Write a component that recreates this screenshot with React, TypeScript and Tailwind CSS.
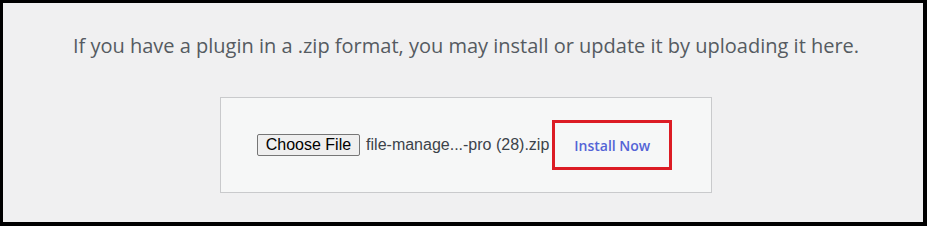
import React from "react";

export default function App() {
  return (
    <div className="w-[927px] h-[226px] box-border border-black border-t-[3px] border-l-[3px] border-r-[4px] border-b-[4px] bg-[#f0f0f1] flex flex-col items-center">
      <p
        className="mt-[29px] pl-[6px] text-[20px] leading-[28px] text-[#555b61] whitespace-nowrap"
        style={{ fontFamily: '"Open Sans", "Noto Sans", sans-serif' }}
      >
        If you have a plugin in a .zip format, you may install or update it by uploading it here.
      </p>
      <div className="mt-[37px] ml-[6px] w-[492px] h-[96px] box-border border border-[#c9cacc] bg-[#f6f7f7] flex items-center justify-center">
        <div className="flex items-center mr-[3px]" style={{ fontFamily: '"Liberation Sans", Arial, sans-serif' }}>
          <span className="h-[22px] px-[8px] box-border border border-[#767676] rounded-[2px] bg-[#efefef] text-[16px] leading-[20px] text-black">
            Choose File
          </span>
          <span className="ml-[6px] text-[16px] text-[#3c434a]">file-manage...-pro (28).zip</span>
          <div className="ml-[3px] w-[120px] h-[50px] box-border border-[3px] border-[#dc1c24] flex items-center justify-center">
            <span
              className="text-[14px] font-semibold text-[#5464d6]"
              style={{ fontFamily: '"Open Sans", "Noto Sans", sans-serif' }}
            >
              Install Now
            </span>
          </div>
        </div>
      </div>
    </div>
  );
}
